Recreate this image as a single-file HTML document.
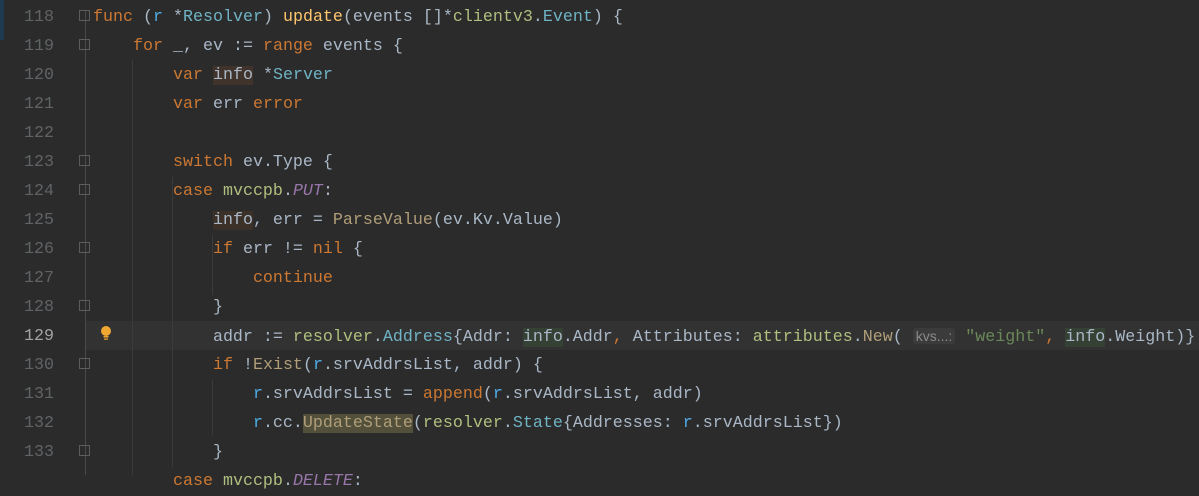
<!DOCTYPE html>
<html><head><meta charset="utf-8"><style>
body{margin:0;width:1199px;height:475px;overflow:hidden;background:#2b2b2b;font-family:"Liberation Mono",monospace;font-size:16.667px;}
.ln{position:absolute;left:0;width:54px;text-align:right;color:#606366;height:29px;line-height:29px}
.c{position:absolute;left:93px;white-space:pre;color:#a9b7c6;height:29px;line-height:29px}
.k{color:#cc7832}.t{color:#6fb3c4}.r{color:#4eade5}.f{color:#ffc66d}.p{color:#afbf7e}.s{color:#6a8759}.cn{color:#9876aa;font-style:italic}.cl{color:#b09d79}
.ru{background:#40332b}.wu{background:#344134}.us{background:#52503a}
.g{position:absolute;width:1px;background:#3b3b3b}
.fold{position:absolute;left:79px;width:11px;height:11px;border:1px solid #5a5d60;box-sizing:border-box}
.hint{background:#3b3b3b;color:#8a8a8a;border-radius:3px;padding:0 3px;font-family:"Liberation Sans",sans-serif;font-size:14px}
</style></head><body>
<div style="position:absolute;left:0;top:0;width:4px;height:40px;background:#1d3a4f"></div>
<div style="position:absolute;left:85px;top:321px;width:1114px;height:29px;background:#323232"></div>
<div style="position:absolute;left:85px;top:10px;width:1px;height:465px;background:#4a4a4a"></div>
<div class="g" style="left:132px;top:60px;height:415px"></div>
<div class="g" style="left:172px;top:177px;height:290px"></div>
<div class="g" style="left:212px;top:235px;height:60px"></div>
<div class="g" style="left:212px;top:380px;height:55px"></div>
<div class="fold" style="top:10px"></div><div class="fold" style="top:39px"></div><div class="fold" style="top:155px"></div><div class="fold" style="top:184px"></div><div class="fold" style="top:242px"></div><div class="fold" style="top:300px"></div><div class="fold" style="top:358px"></div><div class="fold" style="top:445px"></div>
<svg style="position:absolute;left:100px;top:325px" width="12" height="16"><circle cx="6" cy="6" r="5" fill="#f0a732"/><rect x="3.5" y="11" width="5" height="1.5" fill="#f0a732"/><rect x="4" y="13.5" width="4" height="1.2" fill="#f0a732"/></svg>
<div class="ln" style="top:3px">118</div><div class="ln" style="top:32px">119</div><div class="ln" style="top:61px">120</div><div class="ln" style="top:90px">121</div><div class="ln" style="top:119px">122</div><div class="ln" style="top:148px">123</div><div class="ln" style="top:177px">124</div><div class="ln" style="top:206px">125</div><div class="ln" style="top:235px">126</div><div class="ln" style="top:264px">127</div><div class="ln" style="top:293px">128</div><div class="ln" style="top:322px;color:#a4a3a3">129</div><div class="ln" style="top:351px">130</div><div class="ln" style="top:380px">131</div><div class="ln" style="top:409px">132</div><div class="ln" style="top:438px">133</div>
<div class="c" style="top:3px"><span class="k">func</span> (<span class="r">r</span> *<span class="t">Resolver</span>) <span class="f">update</span>(events []*<span class="p">clientv3</span>.<span class="t">Event</span>) {</div>
<div class="c" style="top:32px">    <span class="k">for</span> _, ev := <span class="k">range</span> events {</div>
<div class="c" style="top:61px">        <span class="k">var</span> <span class="ru">info</span> *<span class="t">Server</span></div>
<div class="c" style="top:90px">        <span class="k">var</span> err <span class="k">error</span></div>
<div class="c" style="top:148px">        <span class="k">switch</span> ev.Type {</div>
<div class="c" style="top:177px">        <span class="k">case</span> <span class="p">mvccpb</span>.<span class="cn">PUT</span>:</div>
<div class="c" style="top:206px">            <span class="wu" style="background:#3c3128">info</span>, err = <span class="cl">ParseValue</span>(ev.Kv.Value)</div>
<div class="c" style="top:235px">            <span class="k">if</span> err != <span class="k">nil</span> {</div>
<div class="c" style="top:264px">                <span class="k">continue</span></div>
<div class="c" style="top:293px">            }</div>
<div class="c" style="top:322px">            addr := <span class="p">resolver</span>.<span class="t">Address</span>{Addr: <span class="wu">info</span>.Addr<span class="k">,</span> Attributes: <span class="p">attributes</span>.<span class="cl">New</span>( <span class="hint">kvs...:</span> <span class="s">"weight"</span><span class="k">,</span> <span class="wu">info</span>.Weight)}</div>
<div class="c" style="top:351px">            <span class="k">if</span> !<span class="cl">Exist</span>(<span class="r">r</span>.srvAddrsList, addr) {</div>
<div class="c" style="top:380px">                <span class="r">r</span>.srvAddrsList = <span class="k">append</span>(<span class="r">r</span>.srvAddrsList, addr)</div>
<div class="c" style="top:409px">                <span class="r">r</span>.cc.<span class="us cl">UpdateState</span>(<span class="p">resolver</span>.<span class="t">State</span>{Addresses: <span class="r">r</span>.srvAddrsList})</div>
<div class="c" style="top:438px">            }</div>
<div class="c" style="top:467px">        <span class="k">case</span> <span class="p">mvccpb</span>.<span class="cn">DELETE</span>:</div>
</body></html>
